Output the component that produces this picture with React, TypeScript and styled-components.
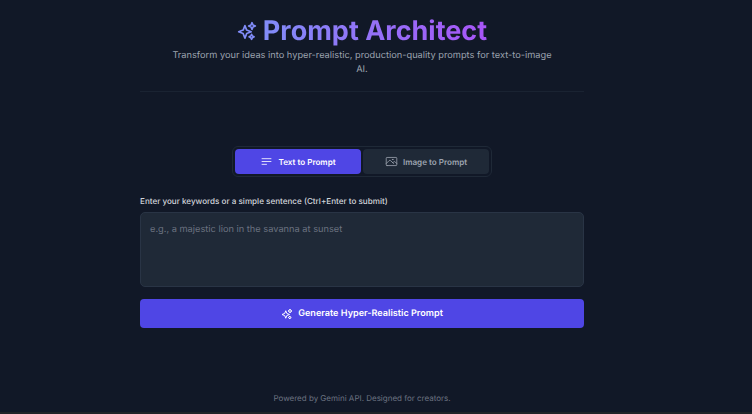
import type { FC } from 'react';
import styled, { createGlobalStyle } from 'styled-components';
import { HiOutlineBars3BottomLeft, HiOutlinePhoto } from 'react-icons/hi2';

const GlobalStyle = createGlobalStyle`
  html, body {
    margin: 0;
    padding: 0;
    background: #111827;
    overflow: hidden;
  }
  * { box-sizing: border-box; }
`;

const Page = styled.div`
  width: 752px;
  height: 414px;
  padding-right: 28px;
  background: #111827;
  border-bottom: 2px solid #202428;
  font-family: Inter, "Noto Sans", sans-serif;
  text-rendering: geometricPrecision;
  display: flex;
  flex-direction: column;
  align-items: center;
`;

const Main = styled.main`
  width: 444px;
  flex: 1;
  display: flex;
  flex-direction: column;
`;

const Header = styled.header`
  padding: 13px 0 14px;
  display: flex;
  flex-direction: column;
  align-items: center;
  border-bottom: 1px solid #1a2332;
`;

const TitleRow = styled.div`
  display: flex;
  align-items: center;
  gap: 6px;
  color: #818cf8;
`;

const Title = styled.h1`
  margin: 0;
  font-size: 27px;
  line-height: 36px;
  font-weight: 700;
  background: linear-gradient(90deg, #818cf8, #a855f7);
  -webkit-background-clip: text;
  background-clip: text;
  color: transparent;
`;

const Subtitle = styled.p`
  margin: 0;
  width: 384px;
  font-size: 9.25px;
  line-height: 14px;
  text-align: center;
  color: #9ca3af;
`;

const TabsWrap = styled.div`
  margin-top: 54px;
  display: flex;
  justify-content: center;
`;

const Tabs = styled.div`
  display: flex;
  gap: 2px;
  padding: 2px;
  background: #111827;
  border: 1px solid #1f2937;
  border-radius: 6px;
`;

const Tab = styled.button<{ $active?: boolean }>`
  width: 126px;
  height: 25px;
  padding: 0;
  border: 0;
  border-radius: 4px;
  display: flex;
  align-items: center;
  justify-content: center;
  gap: 5px;
  font-family: inherit;
  text-rendering: inherit;
  font-size: 8.1px;
  font-weight: 600;
  background: ${({ $active }) => ($active ? '#4f46e5' : '#1f2937')};
  color: ${({ $active }) => ($active ? '#ffffff' : '#9ca3af')};
`;

const Label = styled.label`
  margin-top: 18px;
  font-size: 8.1px;
  line-height: 12px;
  font-weight: 500;
  color: #d1d5db;
`;

const Prompt = styled.textarea`
  margin-top: 5px;
  height: 75px;
  padding: 10px 9px;
  resize: none;
  background: #1f2937;
  border: 1px solid #293445;
  border-radius: 5px;
  font-family: inherit;
  text-rendering: inherit;
  font-size: 9.25px;
  line-height: 14px;
  color: #e5e7eb;
  outline: none;

  &::placeholder {
    color: #6b7280;
    opacity: 1;
  }
`;

const Generate = styled.button`
  margin-top: 12px;
  height: 29px;
  border: 0;
  border-radius: 4px;
  background: #4f46e5;
  color: #ffffff;
  display: flex;
  align-items: center;
  justify-content: center;
  gap: 5px;
  font-family: inherit;
  text-rendering: inherit;
  font-size: 9.1px;
  font-weight: 600;
`;

const Footer = styled.footer`
  padding-bottom: 8px;
  font-size: 8px;
  line-height: 12px;
  color: #6b7280;
`;

// chunkier than the icon-pack sparkles: one big star and two small ones
const SparkleIcon: FC<{ size: number }> = ({ size }) => (
  <svg width={size} height={size} viewBox="0 0 24 24" fill="none" stroke="currentColor" strokeWidth={2} strokeLinejoin="round">
    <path d="M9.5 5.5 L11.6 10.9 L17 13 L11.6 15.1 L9.5 20.5 L7.4 15.1 L2 13 L7.4 10.9 Z" />
    <path d="M18 2 L19.2 4.8 L22 6 L19.2 7.2 L18 10 L16.8 7.2 L14 6 L16.8 4.8 Z" />
    <path d="M17.5 16 L18.5 18 L20.5 19 L18.5 20 L17.5 22 L16.5 20 L14.5 19 L16.5 18 Z" />
  </svg>
);

const App: FC = () => (
  <Page>
    <GlobalStyle />
    <Main>
      <Header>
        <TitleRow>
          <SparkleIcon size={20} />
          <Title>Prompt Architect</Title>
        </TitleRow>
        <Subtitle>
          Transform your ideas into hyper-realistic, production-quality prompts for text-to-image AI.
        </Subtitle>
      </Header>
      <TabsWrap>
        <Tabs>
          <Tab $active>
            <HiOutlineBars3BottomLeft size={13} />
            Text to Prompt
          </Tab>
          <Tab>
            <HiOutlinePhoto size={13} />
            Image to Prompt
          </Tab>
        </Tabs>
      </TabsWrap>
      <Label htmlFor="prompt">Enter your keywords or a simple sentence (Ctrl+Enter to submit)</Label>
      <Prompt id="prompt" placeholder="e.g., a majestic lion in the savanna at sunset" />
      <Generate>
        <SparkleIcon size={12} />
        Generate Hyper-Realistic Prompt
      </Generate>
    </Main>
    <Footer>Powered by Gemini API. Designed for creators.</Footer>
  </Page>
);

export default App;
